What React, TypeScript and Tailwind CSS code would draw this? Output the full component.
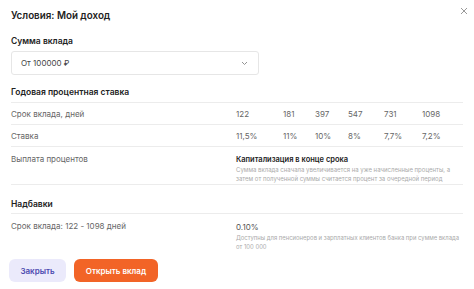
import React from "react";

const terms = ["122", "181", "397", "547", "731", "1098"];
const rates = ["11,5%", "11%", "10%", "8%", "7,7%", "7,2%"];

export default function App() {
  return (
    <div className="h-[289px] w-[474px] overflow-hidden bg-white font-['Inter',sans-serif] text-[#222]">
      {/* Header */}
      <div className="flex h-[32px] items-center justify-between pl-[11px] pr-[6px]">
        <div className="text-[9.8px] font-semibold">Условия: Мой доход</div>
        <svg width="8" height="8" viewBox="0 0 8 8" className="mt-[-10px]">
          <path d="M1 1L7 7M7 1L1 7" stroke="#999" strokeWidth="1" />
        </svg>
      </div>

      <div className="px-[11px]">
        {/* Сумма вклада */}
        <div className="flex h-[19px] items-center text-[8.5px] font-semibold">Сумма вклада</div>
        <div className="flex h-[24px] w-[248px] items-center justify-between rounded-[3px] border border-[#e6e6e6] pl-[9px] pr-[10px]">
          <span className="text-[8px] text-[#444]">От 100000 ₽</span>
          <svg width="7" height="5" viewBox="0 0 7 5">
            <path d="M1 1L3.5 3.5L6 1" stroke="#888" strokeWidth="0.9" fill="none" />
          </svg>
        </div>

        {/* Годовая процентная ставка */}
        <div className="flex h-[28px] items-center border-b border-[#ececec] pt-[8px] text-[8.5px] font-semibold">
          Годовая процентная ставка
        </div>
        <div className="grid h-[22px] grid-cols-[225px_47px_32px_33px_36px_38px_1fr] items-center border-b border-[#ececec] text-[8px] text-[#666]">
          <div>Срок вклада, дней</div>
          {terms.map((t) => (
            <div key={t}>{t}</div>
          ))}
        </div>
        <div className="grid h-[22px] grid-cols-[225px_47px_32px_33px_36px_38px_1fr] items-center border-b border-[#ececec] text-[8px] text-[#666]">
          <div>Ставка</div>
          {rates.map((r) => (
            <div key={r}>{r}</div>
          ))}
        </div>
        <div className="flex h-[38px] border-b border-[#ececec] pt-[7px]">
          <div className="w-[225px] text-[8px] leading-[11px] text-[#666]">Выплата процентов</div>
          <div className="flex-1">
            <div className="text-[7.5px] font-semibold leading-[11px] text-[#222]">Капитализация в конце срока</div>
            <div className="whitespace-nowrap text-[6px] leading-[9px] text-[#aaa]">
              Сумма вклада сначала увеличивается на уже начисленные проценты, а
              <br />
              затем от полученной суммы считается процент за очередной период
            </div>
          </div>
        </div>

        {/* Надбавки */}
        <div className="flex h-[29px] items-center border-b border-[#ececec] pt-[10px] text-[8.5px] font-semibold">
          Надбавки
        </div>
        <div className="flex pt-[7px]">
          <div className="w-[225px] text-[8px] leading-[11px] text-[#666]">Срок вклада: 122 - 1098 дней</div>
          <div className="flex-1">
            <div className="text-[8px] leading-[12px] text-[#555]">0.10%</div>
            <div className="whitespace-nowrap text-[5.9px] leading-[9px] text-[#aaa]">
              Доступны для пенсионеров и зарплатных клиентов банка при сумме вклада
              <br />
              от 100 000
            </div>
          </div>
        </div>

        {/* Buttons */}
        <div className="ml-[-2px] mt-[8px] flex gap-[8px]">
          <button className="flex h-[23px] w-[57px] items-center justify-center rounded-[6px] bg-[#ebeafb] text-[8px] font-semibold text-[#4c4bb0]">
            Закрыть
          </button>
          <button className="flex h-[23px] w-[84px] items-center justify-center rounded-[6px] bg-[#f26427] text-[8px] font-semibold text-white">
            Открыть вклад
          </button>
        </div>
      </div>
    </div>
  );
}
